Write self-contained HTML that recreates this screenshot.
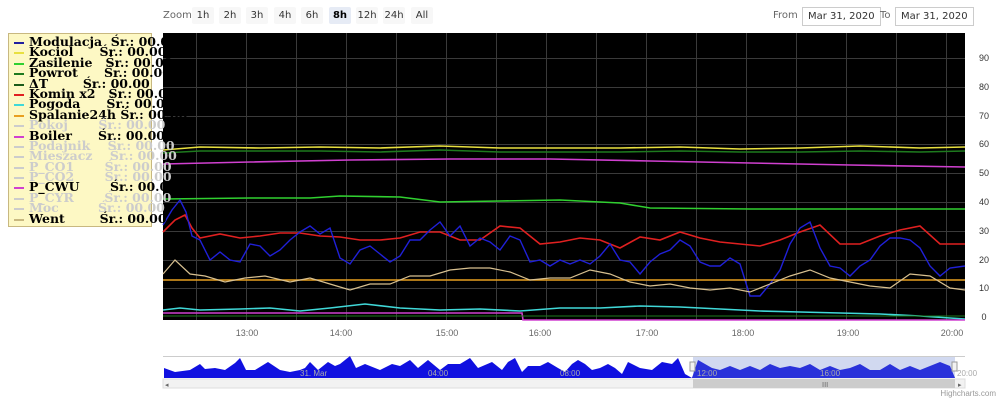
<!DOCTYPE html><html><head><style>
body{margin:0;width:1000px;height:400px;background:#fff;overflow:hidden;position:relative;font-family:"DejaVu Sans","Liberation Sans",sans-serif}
.zb{position:absolute;top:7px;height:17px;font-size:10px;color:#333;line-height:17px;text-align:center;background:#f7f7f7;border-radius:2px}
.lg{position:absolute;left:8px;top:33px;width:144px;height:194px;background:#fdf8c4;border:1px solid #c8b880;font-family:"DejaVu Serif","Liberation Serif",serif;font-weight:bold;font-size:12.5px;line-height:10.4px;overflow:visible;z-index:2;padding-top:3px;box-sizing:border-box}
.lg div{height:10.4px;position:relative;padding-left:20px;white-space:pre}
.lg i{position:absolute;left:5px;top:5px;width:10px;height:2px}
.g{color:#ccc}
.inp{position:absolute;top:7px;height:17px;border:1px solid #ccc;font-size:10px;line-height:17px;padding:0 5px;color:#333}
</style></head><body>
<div style="position:absolute;left:163px;top:7px;font-size:10px;line-height:17px;color:#666">Zoom</div>
<div class="zb" style="left:192px;width:22px">1h</div>
<div class="zb" style="left:219px;width:22px">2h</div>
<div class="zb" style="left:246px;width:22px">3h</div>
<div class="zb" style="left:274px;width:22px">4h</div>
<div class="zb" style="left:301px;width:22px">6h</div>
<div class="zb" style="left:329px;width:22px;background:#e6ebf5;font-weight:bold;color:#000">8h</div>
<div class="zb" style="left:356px;width:22px">12h</div>
<div class="zb" style="left:383px;width:22px">24h</div>
<div class="zb" style="left:411px;width:22px">All</div>
<div style="position:absolute;left:773px;top:7px;font-size:10px;line-height:17px;color:#666">From</div>
<div class="inp" style="left:802px">Mar 31, 2020</div>
<div style="position:absolute;left:880px;top:7px;font-size:10px;line-height:17px;color:#666">To</div>
<div class="inp" style="left:895px">Mar 31, 2020</div>
<svg width="1000" height="400" style="position:absolute;left:0;top:0">
<rect x="163" y="33" width="802" height="287" fill="#000"/>
<g stroke="#3a3a3a" stroke-width="1">
<path d="M163 58.5H965M163 87.5H965M163 116.5H965M163 144.5H965M163 173.5H965M163 202.5H965M163 231.5H965M163 260.5H965M163 288.5H965"/>
<path d="M196.5 33V320M246.5 33V320M296.5 33V320M346.5 33V320M396.5 33V320M446.5 33V320M496.5 33V320M546.5 33V320M596.5 33V320M646.5 33V320M696.5 33V320M746.5 33V320M796.5 33V320M846.5 33V320M896.5 33V320M946.5 33V320"/>
</g>
<g fill="none" stroke-width="1.6">
<path stroke="#e8e040" d="M163 150L200 147L260 148L320 147L380 148L440 146L500 148L560 148L620 148L680 147L740 149L800 148L860 146L920 148L965 147"/>
<path stroke="#1e7a1e" d="M163 153L200 151L260 151L320 151L380 152L440 150L500 152L560 152L620 152L680 151L740 152L800 152L860 151L920 152L965 151"/>
<path stroke="#d040d0" d="M163 164L250 162L350 160L450 159L550 159L650 161L750 163L850 165L965 167"/>
<path stroke="#30d030" d="M163 199L250 198L310 198L340 196L400 197L440 202L500 201L560 200L620 203L650 208L750 209L850 209L965 209"/>
<path stroke="#e02020" d="M163 232L175 220L185 215L192 228L200 238L220 234L240 238L260 236L280 233L300 233L320 236L340 237L360 240L380 240L400 238L420 232L440 232L460 240L480 240L500 226L520 228L540 244L560 242L580 238L600 240L620 248L640 237L660 240L680 232L700 238L720 242L740 244L760 246L780 240L800 232L820 225L840 244L860 244L880 236L900 230L920 226L940 244L965 244"/>
<path stroke="#2020d8" stroke-width="1.4" d="M163 225L172 210L180 200L186 212L192 236L200 240L210 260L220 252L230 260L240 262L250 244L260 246L270 256L280 250L290 240L300 232L310 226L320 234L330 228L340 258L350 264L360 250L370 246L380 254L390 262L400 256L410 240L420 240L430 230L440 222L450 236L460 226L470 246L480 238L490 242L500 250L510 236L520 240L530 262L540 260L550 266L560 260L570 264L580 260L590 264L600 256L610 244L620 260L630 262L640 274L650 262L660 254L670 250L680 240L690 246L700 262L710 266L720 266L730 258L740 264L750 296L760 296L770 284L780 270L790 244L800 228L810 222L820 248L830 266L840 268L850 276L860 266L870 260L880 246L890 238L900 238L910 240L920 248L930 266L940 276L950 268L965 266"/>
<path stroke="#e8a020" d="M163 280H965"/>
<path stroke="#d8c090" stroke-width="1.2" d="M163 274L175 260L190 274L205 276L225 282L245 278L265 276L290 282L310 278L330 284L350 290L370 284L390 284L410 276L430 276L450 270L470 268L490 268L510 272L530 280L550 278L570 278L590 270L610 274L630 282L650 286L670 284L690 288L710 290L730 288L750 292L770 284L790 276L810 270L830 278L850 282L870 286L890 288L910 274L930 276L950 288L965 290"/>
<path stroke="#40d8d8" d="M163 310L180 308L200 310L240 309L270 308L300 311L330 308L365 304L400 308L440 310L480 309L520 311L560 308L600 308L640 306L680 307L720 309L760 311L800 312L840 313L880 314L920 316L965 319"/>
<path stroke="#d040d0" d="M163 313L522 313L523 320L965 320"/>
<path stroke="#1e7a1e" stroke-width="1" d="M163 316H965"/>
</g>
<g font-size="9" fill="#333" text-anchor="middle" font-family="Liberation Sans,sans-serif">
<text x="984" y="61">90</text><text x="984" y="90">80</text><text x="984" y="119">70</text><text x="984" y="147">60</text><text x="984" y="176">50</text><text x="984" y="205">40</text><text x="984" y="234">30</text><text x="984" y="263">20</text><text x="984" y="291">10</text><text x="984" y="320">0</text>
</g>
<g font-size="9" fill="#666" text-anchor="middle" font-family="Liberation Sans,sans-serif">
<text x="247" y="336">13:00</text><text x="341" y="336">14:00</text><text x="447" y="336">15:00</text><text x="540" y="336">16:00</text><text x="647" y="336">17:00</text><text x="743" y="336">18:00</text><text x="848" y="336">19:00</text><text x="952" y="336">20:00</text>
</g>
<line x1="163" y1="356.5" x2="965" y2="356.5" stroke="#ccc"/>
<path fill="#1010e0" d="M164 378L164 368L175 372L190 370L200 364L205 369L215 368L225 370L235 363L240 358L246 370L255 370L268 362L280 370L290 372L300 370L305 368L310 362L318 370L328 362L335 366L340 364L350 356L356 368L365 364L380 370L392 364L400 366L410 360L418 368L428 360L440 370L448 364L460 364L470 358L478 368L492 362L502 370L508 362L515 358L522 372L528 366L540 366L548 362L558 368L565 372L572 364L578 360L585 364L592 370L600 368L608 364L615 368L622 374L628 362L640 368L652 370L662 362L672 364L678 358L685 374L692 378L698 360L705 364L712 368L720 370L730 366L740 370L750 366L760 370L770 364L780 368L790 366L800 368L810 364L820 370L830 366L840 370L850 368L860 364L870 370L880 370L890 364L900 370L910 366L920 370L930 366L940 362L950 366L955 378Z"/>
<rect x="693" y="357" width="262" height="21" fill="#6680cc" fill-opacity="0.3"/>
<rect x="690" y="362" width="5" height="9" fill="#f2f2f2" stroke="#999"/>
<rect x="952" y="362" width="5" height="9" fill="#f2f2f2" stroke="#999"/>
<g font-size="8" fill="#aaa" font-family="Liberation Sans,sans-serif"><text x="300" y="376">31. Mar</text><text x="428" y="376">04:00</text><text x="560" y="376">08:00</text><text x="697" y="376">12:00</text><text x="820" y="376">16:00</text><text x="957" y="376">20:00</text></g>
<rect x="163" y="379" width="802" height="9" fill="#f2f2f2" stroke="#ddd"/>
<rect x="693" y="379" width="262" height="9" fill="#ccc"/>
<text x="822" y="387" font-size="7" fill="#666">III</text>
<text x="165" y="387" font-size="7" fill="#666">◂</text><text x="958" y="387" font-size="7" fill="#666">▸</text>
<text x="996" y="396" font-size="8" fill="#999" text-anchor="end" font-family="Liberation Sans,sans-serif">Highcharts.com</text>
</svg>
<div class="lg"><div><i style="background:#2020a0"></i>Modulacja  Śr.: 00.00</div><div><i style="background:#e8e040"></i>Kociol      Śr.: 00.00</div><div><i style="background:#30d030"></i>Zasilenie   Śr.: 00.00</div><div><i style="background:#1e7a1e"></i>Powrot      Śr.: 00.00</div><div><i style="background:#1a5a1a"></i>ΔT        Śr.: 00.00</div><div><i style="background:#e02020"></i>Komin x2   Śr.: 00.00</div><div><i style="background:#40d8d8"></i>Pogoda      Śr.: 00.00</div><div><i style="background:#e8a020"></i>Spalanie24h Śr.: 00.00</div><div class="g"><i style="background:#ccc"></i>Pokoj       Śr.: 00.00</div><div><i style="background:#d040d0"></i>Boiler      Śr.: 00.00</div><div class="g"><i style="background:#ccc"></i>Podajnik    Śr.: 00.00</div><div class="g"><i style="background:#ccc"></i>Mieszacz    Śr.: 00.00</div><div class="g"><i style="background:#ccc"></i>P_CO1       Śr.: 00.00</div><div class="g"><i style="background:#ccc"></i>P_CO2       Śr.: 00.00</div><div><i style="background:#d040d0"></i>P_CWU       Śr.: 00.00</div><div class="g"><i style="background:#ccc"></i>P_CYR       Śr.: 00.00</div><div class="g"><i style="background:#ccc"></i>Moc         Śr.: 00.00</div><div><i style="background:#c8b880"></i>Went        Śr.: 00.00</div></div>
</body></html>
